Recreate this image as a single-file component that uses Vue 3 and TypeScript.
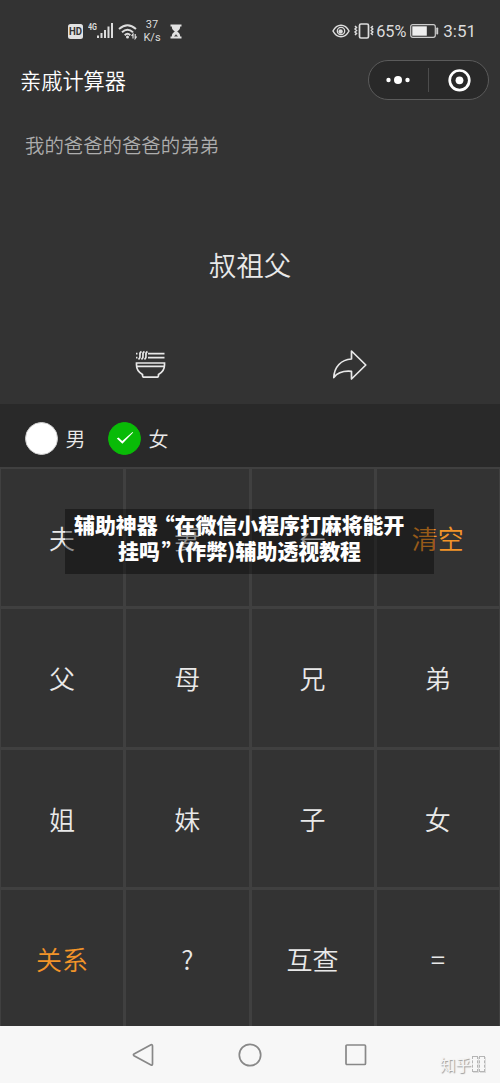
<script setup lang="ts">
interface Key {
  label: string
  accent?: boolean
}

const keys: Key[] = [
  { label: '夫' }, { label: '妻' }, { label: '←' }, { label: '清空', accent: true },
  { label: '父' }, { label: '母' }, { label: '兄' }, { label: '弟' },
  { label: '姐' }, { label: '妹' }, { label: '子' }, { label: '女' },
  { label: '关系', accent: true }, { label: '?' }, { label: '互查' }, { label: '=' },
]
</script>

<template>
  <div class="screen">
    <header class="status">
      <svg class="hd" width="15" height="15" viewBox="0 0 15 15">
        <rect width="15" height="15" rx="2.500" fill="#e2e2e2" />
        <text x="7.500" y="11.200" text-anchor="middle" font-size="10" font-weight="700" fill="#333" textLength="13" lengthAdjust="spacingAndGlyphs">HD</text>
      </svg>
      <svg class="signal" width="26" height="20" viewBox="0 0 26 20">
        <text x="0" y="9.500" font-size="9" font-weight="700" fill="#ddd" textLength="9" lengthAdjust="spacingAndGlyphs">4G</text>
        <path d="M10 18v-2.500M13.500 18v-5M17 18v-8M20.500 18v-11.500M24 18v-15" stroke="#ddd" stroke-width="2" />
      </svg>
      <svg class="wifi" width="20" height="17" viewBox="0 0 20 17" fill="none" stroke="#ddd" stroke-width="1.900">
        <path d="M1 6Q9.500-1.600 18 6M4 9.300Q9.500 4 15 9.300M6.700 12.200Q9.500 9.500 12.300 12.200" />
        <circle cx="9.500" cy="14" r="1.500" fill="#ddd" stroke="none" />
        <path d="M15 15.500v-4.500l-1.500 2M17.200 11v4.500l1.500-2" stroke-width="1.200" />
      </svg>
      <div class="speed"><span>37</span><span>K/s</span></div>
      <svg class="glass" width="12" height="15" viewBox="0 0 12 15">
        <path d="M.5.500h11v2h-1.300c0 2.500-1.200 3.700-3 5 1.800 1.300 3 2.500 3 5h1.300v2H.5v-2h1.300c0-2.500 1.200-3.700 3-5-1.800-1.300-3-2.500-3-5H.5z" fill="#e2e2e2" />
        <path d="M4 12.500L6 10.300l2 2.200z" fill="#444" />
      </svg>
      <div class="right">
        <svg width="18" height="14" viewBox="0 0 18 14" fill="none" stroke="#ddd" stroke-width="1.500">
          <path d="M1 7C5-.7 13-.7 17 7 13 14.700 5 14.700 1 7z" />
          <circle cx="9" cy="7" r="3.700" stroke-width="1.300" />
          <circle cx="8.600" cy="7.500" r="2.200" fill="#ddd" stroke="none" />
        </svg>
        <svg class="vibrate" width="20" height="16" viewBox="0 0 20 16" fill="none" stroke="#ddd">
          <rect x="5.500" y="1" width="9" height="14" rx="1.500" stroke-width="1.700" />
          <path d="M1 3l1.500 1.500L1 6l1.500 1.500L1 9l1.500 1.500L1 12M18.800 3l-1.500 1.500L18.800 6l-1.500 1.500L18.800 9l-1.500 1.500 1.500 1.500" stroke-width="1.500" />
        </svg>
        <span class="pct">65%</span>
        <svg class="battery" width="29" height="14" viewBox="0 0 29 14">
          <rect x=".7" y=".7" width="24.600" height="12.600" rx="2" fill="none" stroke="#ccc" stroke-width="1.200" />
          <rect x="2.300" y="2.300" width="14.500" height="9.400" fill="#eee" />
          <rect x="26.300" y="3.500" width="1.900" height="7" rx=".8" fill="#ccc" />
        </svg>
        <span class="time">3:51</span>
      </div>
    </header>

    <div class="titlebar">
      <h1>亲戚计算器</h1>
      <div class="capsule">
        <svg width="121" height="40" viewBox="0 0 121 40">
          <rect x=".5" y=".5" width="120" height="39" rx="19.500" fill="#292929" stroke="#5b5b5b" />
          <path d="M60.500 8v24" stroke="#4c4c4c" />
          <g fill="#fff">
            <circle cx="20.500" cy="20" r="2.200" /><circle cx="30" cy="20" r="4" /><circle cx="39.500" cy="20" r="2.200" />
            <circle cx="91.500" cy="20.300" r="3.900" />
          </g>
          <circle cx="91.500" cy="20.300" r="9.800" fill="none" stroke="#fff" stroke-width="2.700" />
        </svg>
      </div>
    </div>

    <p class="expression">我的爸爸的爸爸的弟弟</p>
    <p class="result">叔祖父</p>

    <div class="actions">
      <svg width="32" height="30" viewBox="0 0 32 30" fill="none" stroke="#e8e8e8" stroke-width="1.700">
        <path d="M1 3.700h1.500M1 7.700h1.500M13 3.700h16.500M13 7.700h16.500" />
        <path d="M6.500 1.500Q4.500 2.500 5 5T3.500 9.500M9.500 1.500Q7.500 2.500 8 5T6.500 9.500M12.500 1.500Q10.500 2.500 11 5T9.500 9.500" />
        <path d="M1.500 13h28v2c0 4.500-2.500 7.500-6 9.500v1c0 1-1 1.700-2 1.700h-12c-1 0-2-.7-2-1.700v-1C4 22.500 1.500 19.500 1.500 15zM2 16.300h27" />
      </svg>
      <svg width="36" height="32" viewBox="0 0 36 32" fill="none" stroke="#e8e8e8" stroke-width="1.700" stroke-linejoin="round">
        <path d="M19.500 2l14.300 14-14.300 14v-7.700C10.500 21.500 5.500 23.500 1.800 28.500 2.300 18 9 10.500 19.500 10z" />
      </svg>
    </div>

    <div class="gender">
      <span class="radio"></span><span class="option male">男</span>
      <span class="radio checked">
        <svg width="18" height="14" viewBox="0 0 18 14"><path d="M.8 7.500l1.700-1 3.700 3.500L16.500 1l.7.600L6.400 12.700z" fill="#fff" /></svg>
      </span><span class="option">女</span>
    </div>

    <main class="keypad">
      <div v-for="key in keys" :key="key.label" class="key" :class="{ accent: key.accent }">{{ key.label }}</div>
    </main>

    <nav class="nav">
      <svg width="22" height="24" viewBox="0 0 22 24"><path d="M19 1.800L2 11q-1.200.8 0 1.700L19 22q1.500.6 1.500-1V3q0-1.700-1.500-1.200z" /></svg>
      <svg width="24" height="24" viewBox="0 0 24 24"><circle cx="12" cy="12" r="10.700" /></svg>
      <svg width="22" height="22" viewBox="0 0 22 22"><rect x="1" y="1" width="19.500" height="19.500" rx="1" /></svg>
    </nav>

    <div class="watermark">
      <span>知乎</span><i></i><i></i>
    </div>

    <div class="caption">
      <div class="line">辅助神器<span class="open">“</span>在微信小程序打麻将能开</div>
      <div class="line second">挂吗<span class="close">”</span><span class="paren">(</span>作弊<span class="paren">)</span>辅助透视教程</div>
    </div>
  </div>
</template>

<style>
body {
  background: #333;
}
</style>

<style scoped>
.screen {
  position: relative;
  width: 500px;
  height: 1083px;
  overflow: hidden;
  display: flex;
  flex-direction: column;
  background: #333;
  color: #e9e9e9;
  font-family: "Noto Sans CJK SC", sans-serif;
}
.screen svg {
  display: block;
  flex: none;
}
.status {
  height: 60px;
  box-sizing: border-box;
  padding: 2px 24px 0 68px;
  display: flex;
  align-items: center;
  font-family: Roboto, sans-serif;
  color: #dcdcdc;
}
.signal {
  margin: -2px 0 0 5px;
}
.wifi {
  margin-left: 4px;
}
.speed {
  width: 20px;
  margin-left: 4px;
  display: flex;
  flex-direction: column;
  align-items: center;
  font-size: 11px;
  line-height: 13px;
}
.glass {
  margin-left: 8px;
}
.right {
  margin-left: auto;
  display: flex;
  align-items: center;
}
.vibrate {
  margin-left: 4px;
}
.pct {
  width: 31px;
  margin-left: 2px;
  font-size: 16.300px;
}
.battery {
  margin-left: 3px;
}
.time {
  margin-left: 4px;
  font-size: 17px;
}
.titlebar {
  height: 40px;
  display: flex;
  align-items: center;
  justify-content: space-between;
  padding: 0 11px 0 20px;
}
h1 {
  margin: 0;
  font-size: 21.200px;
  line-height: 32px;
  font-weight: 350;
  color: #fff;
}
.expression {
  margin: 29px 0 0 25px;
  height: 32px;
  line-height: 32px;
  font-size: 19.400px;
  font-weight: 350;
  color: #adadad;
}
.result {
  margin: 83px 0 0;
  height: 40px;
  line-height: 40px;
  text-align: center;
  font-size: 27.500px;
  font-weight: 350;
}
.actions {
  height: 120px;
  display: flex;
  align-items: center;
  justify-content: space-between;
  padding: 42px 132px 0 135px;
  box-sizing: border-box;
}
.gender {
  height: 63px;
  box-sizing: border-box;
  display: flex;
  align-items: center;
  background: #292929;
  padding: 5px 0 0 25px;
}
.radio {
  width: 33px;
  height: 33px;
  box-sizing: border-box;
  border: 1px solid #d0d0d0;
  border-radius: 50%;
  background: #fff;
}
.radio.checked {
  display: flex;
  align-items: center;
  justify-content: center;
  border-color: #09bb07;
  background: #09bb07;
}
.option {
  margin-left: 7.500px;
  padding-top: 1px;
  font-size: 20px;
  font-weight: 350;
}
.male {
  margin-right: 22.500px;
}
.keypad {
  height: 559px;
  box-sizing: border-box;
  padding: 2px 1px 0;
  display: grid;
  grid-template-columns: repeat(4, 1fr);
  grid-template-rows: repeat(4, 137.300px);
  gap: 3px;
  background: #404040;
  overflow: hidden;
}
.key {
  display: flex;
  align-items: center;
  justify-content: center;
  background: #333;
  font-size: 26px;
  font-weight: 350;
}
.accent {
  color: #f29429;
}
.nav {
  height: 57px;
  background: #f7f7f7;
  display: flex;
  align-items: center;
  justify-content: space-between;
  padding: 0 133px 0 132px;
}
.nav svg {
  fill: none;
  stroke: #888;
  stroke-width: 1.700;
}
.watermark {
  position: absolute;
  left: 440px;
  top: 1053px;
  display: flex;
  align-items: center;
  font-size: 15.500px;
  line-height: 22px;
  color: #f4f4f4;
  text-shadow: 1px 1px 1px #999;
}
.watermark i {
  width: 6px;
  height: 16px;
  box-sizing: border-box;
  margin-left: 1px;
  border: 1px dashed #b5b5b5;
  box-shadow: 1px 1px 0 #ddd;
}
.caption {
  position: absolute;
  left: 65px;
  top: 509px;
  width: 369px;
  height: 65px;
  box-sizing: border-box;
  padding-top: 3px;
  background: rgba(0, 0, 0, 0.38);
  color: #fff;
  font-weight: 900;
  font-size: 20.900px;
}
.line {
  height: 26px;
  line-height: 25px;
  padding-left: 9px;
  display: flex;
  white-space: nowrap;
}
.second {
  padding-left: 53px;
}
.open,
.close {
  width: 17px;
  box-sizing: border-box;
  display: flex;
}
.open {
  justify-content: flex-end;
}
.close {
  padding-left: 2px;
}
.paren {
  width: 8.500px;
}
</style>
